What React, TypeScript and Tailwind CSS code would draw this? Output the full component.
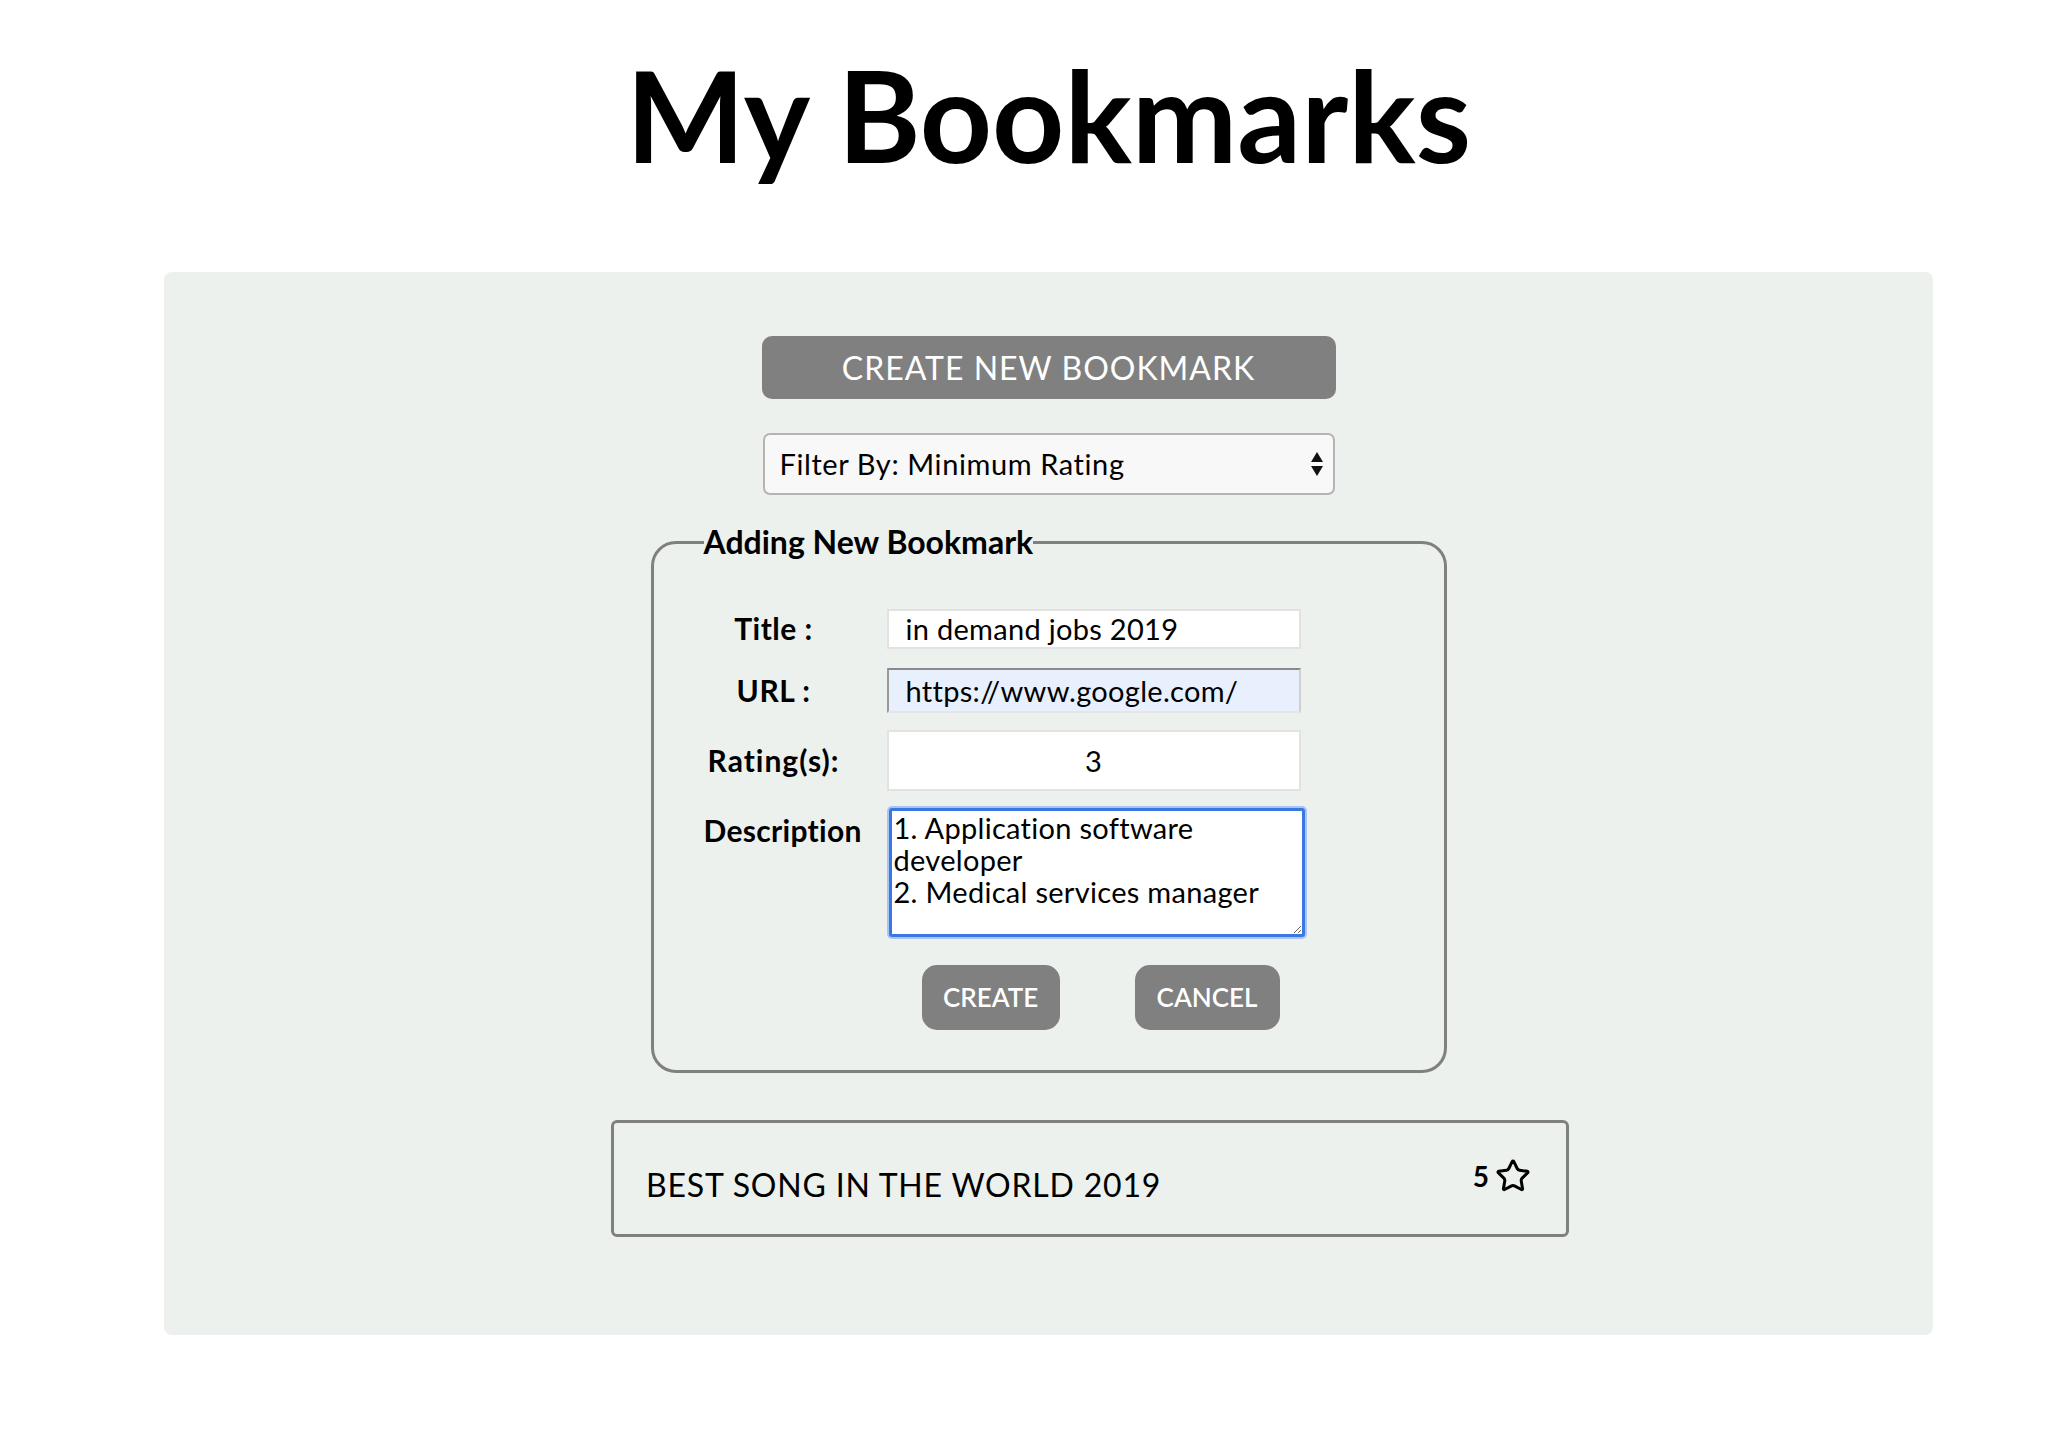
import { Star } from "lucide-react";

const App = () => {
  return (
    <div className="min-h-screen bg-white text-black font-['Lato','Noto_Sans',sans-serif]">
      <div className="pl-[164px] pr-[119px] pb-[107px]">
        {/* heading */}
        <h1 className="pt-[52px] text-center text-[126px] font-bold leading-none">
          My Bookmarks
        </h1>

        {/* panel */}
        <div className="mt-[94px] rounded-lg bg-[#edf1ee] pt-[64px] pb-[98px] flex flex-col items-center">
          <button className="w-[574px] h-[63px] rounded-[10px] bg-[#808080] text-white uppercase text-[32px] tracking-[1px]">
            Create new bookmark
          </button>

          <div className="relative mt-[34px] w-[572px]">
            <select className="w-full h-[62px] appearance-none rounded-[7px] border-2 border-[#b4b4b4] bg-[#f8f8f8] pl-[15px] text-[29px] tracking-[0.6px] outline-none">
              <option>Filter By: Minimum Rating</option>
            </select>
            {/* up/down arrows */}
            <svg
              className="pointer-events-none absolute right-[11px] top-1/2 -translate-y-1/2"
              width="14"
              height="26"
              viewBox="0 0 14 26"
            >
              <path d="M7 1 L13 11 L1 11 Z" fill="#111" />
              <path d="M1 15 L13 15 L7 25 Z" fill="#111" />
            </svg>
          </div>

          {/* add form */}
          <fieldset className="mt-[28px] w-[796px] rounded-[25px] border-[3px] border-[#808080] pl-[50px] pr-0 pb-[40px]">
            <legend className="text-[32px] font-bold leading-[1.2] px-0">Adding New Bookmark</legend>
            <div className="mt-[45px] grid grid-cols-[158px_414px] gap-x-[25px] gap-y-[17px] items-center">
              <label className="pr-[18px] text-center text-[30px] font-bold tracking-[0.5px]">Title :</label>
              <input
                className="h-[40px] border-2 border-[#e2e2e2] bg-white pl-[17px] text-[29px] tracking-[0.3px] outline-none"
                defaultValue="in demand jobs 2019"
              />

              <label className="pr-[18px] text-center text-[30px] font-bold tracking-[0.5px]">URL :</label>
              <input
                className="h-[45px] border-2 border-t-[#8a8a8a] border-l-[#9a9a9a] border-r-[#d0d0d0] border-b-[#e6e6e6] bg-[#e8f0fe] pl-[17px] text-[29px] tracking-[0.3px] outline-none"
                defaultValue="https://www.google.com/"
              />

              <label className="pr-[18px] text-center text-[30px] font-bold tracking-[1px]">Rating(s):</label>
              <input
                className="h-[61px] border-2 border-[#e2e2e2] bg-white text-center text-[29px] outline-none"
                defaultValue="3"
              />

              <label className="self-start text-center text-[30px] font-bold tracking-[0.3px]">Description</label>
              <textarea
                className="ml-[2px] w-[416px] h-[129px] rounded-[3px] border-[3px] border-[#3a78e0] bg-white px-[2px] pt-[1px] text-[29px] leading-[32px] tracking-[0.3px] shadow-[0_0_0_2px_#a8c4f4] outline-none"
                defaultValue={"1. Application software\ndeveloper\n2. Medical services manager"}
              />

              <div />
              <div className="flex gap-[75px] pl-[35px] pt-[11px]">
                <button className="w-[138px] h-[65px] rounded-[15px] bg-[#808080] text-white uppercase text-[26px] font-semibold">
                  Create
                </button>
                <button className="w-[145px] h-[65px] rounded-[15px] bg-[#808080] text-white uppercase text-[26px] font-semibold">
                  Cancel
                </button>
              </div>
            </div>
          </fieldset>

          {/* bookmark list */}
          <div className="mt-[47px] ml-[83px] w-[958px] h-[117px] rounded-md border-[3px] border-[#808080] flex items-center justify-between pl-[32px] pr-[35px]">
            <span className="text-[32px] uppercase tracking-[0.8px] pt-[12px]">Best song in the world 2019</span>
            <div className="flex items-center gap-[6px] -mt-[6px]">
              <span className="text-[28px] font-bold">5</span>
              <Star size={36} strokeWidth={2} />
            </div>
          </div>
        </div>
      </div>
    </div>
  );
};

export default App;
